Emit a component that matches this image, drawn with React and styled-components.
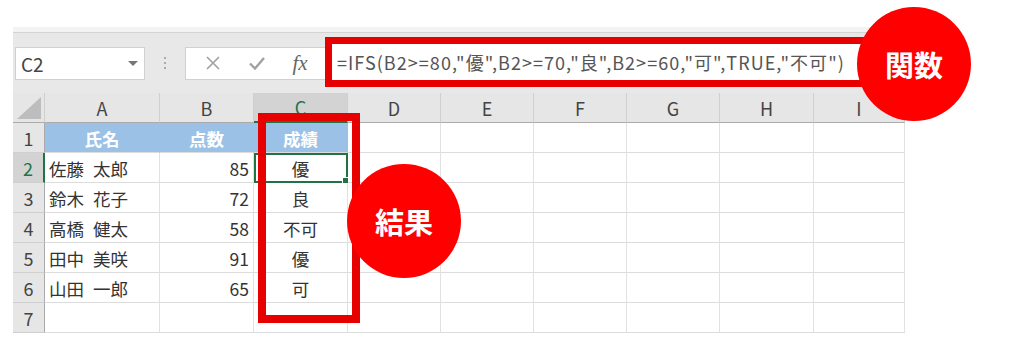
import React from 'react';
import styled, { createGlobalStyle } from 'styled-components';

const GlobalStyle = createGlobalStyle`
  body {
    margin: 0;
    background: #fff;
    font-family: "Noto Sans CJK JP", "Noto Sans", sans-serif;
  }
`;

const GREEN = '#217346';
const RED = '#e60000';

const Page = styled.div`
  width: 1024px;
  height: 359px;
  padding: 27px 0 0 13px;
  box-sizing: border-box;
  overflow: hidden;
`;

//엑셀 전체
const Sheet = styled.div`
  position: relative;
  width: 892px;
`;

const Ribbon = styled.div`
  height: 5px;
  background: #f3f3f3;
  border-bottom: 1px solid #d4d4d4;
`;

const FormulaBar = styled.div`
  height: 60px;
  background: #e8e8e8;
  display: flex;
  align-items: center;
  padding-left: 2px;
`;

const NameBox = styled.div`
  width: 130px;
  height: 33px;
  box-sizing: border-box;
  background: #fff;
  border: 1px solid #d0d0d0;
  display: flex;
  align-items: center;
  justify-content: space-between;
  padding: 0 6px 0 5px;
  font-size: 19px;
  color: #444;
`;

const DropArrow = styled.span`
  width: 0;
  height: 0;
  border-left: 5px solid transparent;
  border-right: 5px solid transparent;
  border-top: 5px solid #777;
`;

const Grip = styled.div`
  width: 40px;
  display: flex;
  flex-direction: column;
  align-items: center;
  gap: 3px;
`;

const Dot = styled.span`
  width: 2px;
  height: 2px;
  background: #aaa;
`;

const ButtonBox = styled.div`
  width: 140px;
  height: 33px;
  box-sizing: border-box;
  background: #fff;
  border: 1px solid #d0d0d0;
  border-right: none;
  display: flex;
  align-items: center;
  justify-content: space-around;
  padding: 0 4px 0 6px;
`;

const Fx = styled.span`
  font-family: "Liberation Serif", serif;
  font-style: italic;
  font-size: 21px;
  color: #666;
  line-height: 1;
`;

//수식 입력 칸 (빨간 테두리)
const FormulaBox = styled.div`
  width: 555px;
  height: 50px;
  margin-top: -2px;
  box-sizing: border-box;
  border: 7px solid ${RED};
  background: #fff;
  display: flex;
  align-items: center;
  padding-left: 5px;
  font-size: 18px;
  letter-spacing: 1.05px;
  color: #555;
  white-space: nowrap;
`;

const Grid = styled.div`
  display: grid;
  grid-template-columns: 32px 115px 94px 94px 93px 93px 93px 93px 94px 91px;
  grid-auto-rows: 30px;
`;

const ColHead = styled.div`
  background: ${p => (p.$active ? '#d3d3d3' : '#e6e6e6')};
  border-right: 1px solid #cfcfcf;
  border-bottom: ${p => (p.$active ? `2px solid ${GREEN}` : '1px solid #ababab')};
  box-sizing: border-box;
  display: flex;
  align-items: center;
  justify-content: center;
  font-size: 18px;
  color: ${p => (p.$active ? GREEN : '#444')};
`;

const Corner = styled.div`
  background: #e6e6e6;
  border-right: 1px solid #cfcfcf;
  border-bottom: 1px solid #ababab;
  box-sizing: border-box;
  display: flex;
  align-items: flex-end;
  justify-content: flex-end;
  padding: 0 3px 3px 0;
`;

const CornerTri = styled.span`
  width: 0;
  height: 0;
  border-left: 24px solid transparent;
  border-bottom: 22px solid #bdbdbd;
`;

const RowHead = styled.div`
  background: ${p => (p.$active ? '#d3d3d3' : '#e6e6e6')};
  border-right: ${p => (p.$active ? `2px solid ${GREEN}` : '1px solid #ababab')};
  border-bottom: 1px solid #cfcfcf;
  box-sizing: border-box;
  display: flex;
  align-items: center;
  justify-content: center;
  font-size: 18px;
  color: ${p => (p.$active ? GREEN : '#444')};
`;

const Cell = styled.div`
  position: relative;
  background: ${p => (p.$head ? '#9bc2e6' : '#fff')};
  border-right: 1px solid ${p => (p.$head ? '#9bc2e6' : '#e1e1e1')};
  border-bottom: 1px solid #dcdcdc;
  box-sizing: border-box;
  display: flex;
  align-items: center;
  justify-content: ${p => p.$align || 'flex-start'};
  padding: 1px 4px 0;
  font-size: 17.5px;
  word-spacing: 5px;
  font-weight: ${p => (p.$head ? 700 : 400)};
  color: ${p => (p.$head ? '#fff' : '#333')};
  white-space: nowrap;
  ${p => p.$selected && `outline: 2px solid ${GREEN}; outline-offset: -2px;`}
`;

const Handle = styled.span`
  position: absolute;
  right: -3px;
  bottom: -3px;
  width: 6px;
  height: 6px;
  background: ${GREEN};
  border: 1px solid #fff;
`;

//빨간 강조 박스
const ColumnFrame = styled.div`
  position: absolute;
  left: 245px;
  top: 86px;
  width: 102px;
  height: 210px;
  box-sizing: border-box;
  border: 8px solid ${RED};
`;

const Badge = styled.div`
  position: absolute;
  left: ${p => p.$x}px;
  top: ${p => p.$y}px;
  width: 114px;
  height: 114px;
  border-radius: 50%;
  background: #ff0000;
  color: #fff;
  display: flex;
  align-items: center;
  justify-content: center;
  font-size: 29px;
  font-weight: 700;
`;

const cols = ['A', 'B', 'C', 'D', 'E', 'F', 'G', 'H', 'I'];

const rows = [
  ['氏名', '点数', '成績'],
  ['佐藤 太郎', '85', '優'],
  ['鈴木 花子', '72', '良'],
  ['高橋 健太', '58', '不可'],
  ['田中 美咲', '91', '優'],
  ['山田 一郎', '65', '可'],
  ['', '', ''],
];

function App() {
  return (
    <>
      <GlobalStyle />
      <Page>
        <Sheet>
          <Ribbon />
          <FormulaBar>
            <NameBox>C2<DropArrow /></NameBox>
            <Grip><Dot /><Dot /><Dot /></Grip>
            <ButtonBox>
              <svg width="16" height="16" viewBox="0 0 16 16">
                <path d="M2 2L14 14M14 2L2 14" stroke="#a0a0a0" strokeWidth="1.6" fill="none" />
              </svg>
              <svg width="18" height="16" viewBox="0 0 18 16">
                <path d="M2 8.5L7 13.5L16 3" stroke="#a0a0a0" strokeWidth="2.4" fill="none" />
              </svg>
              <Fx>fx</Fx>
            </ButtonBox>
            <FormulaBox>=IFS(B2&gt;=80,"優",B2&gt;=70,"良",B2&gt;=60,"可",TRUE,"不可")</FormulaBox>
          </FormulaBar>
          <Grid>
            <Corner><CornerTri /></Corner>
            {cols.map(c => (
              <ColHead key={c} $active={c === 'C'}>{c}</ColHead>
            ))}
            {rows.map((r, i) => (
              <React.Fragment key={i}>
                <RowHead $active={i === 1}>{i + 1}</RowHead>
                <Cell $head={i === 0} $align={i === 0 ? 'center' : 'flex-start'}>{r[0]}</Cell>
                <Cell $head={i === 0} $align={i === 0 ? 'center' : 'flex-end'}>{r[1]}</Cell>
                <Cell $head={i === 0} $align="center" $selected={i === 1}>
                  {r[2]}
                  {i === 1 && <Handle />}
                </Cell>
                {cols.slice(3).map(c => <Cell key={c} />)}
              </React.Fragment>
            ))}
          </Grid>
          <ColumnFrame />
          <Badge $x={844} $y={-20}>関数</Badge>
          <Badge $x={334} $y={137}>結果</Badge>
        </Sheet>
      </Page>
    </>
  );
}

export default App;
